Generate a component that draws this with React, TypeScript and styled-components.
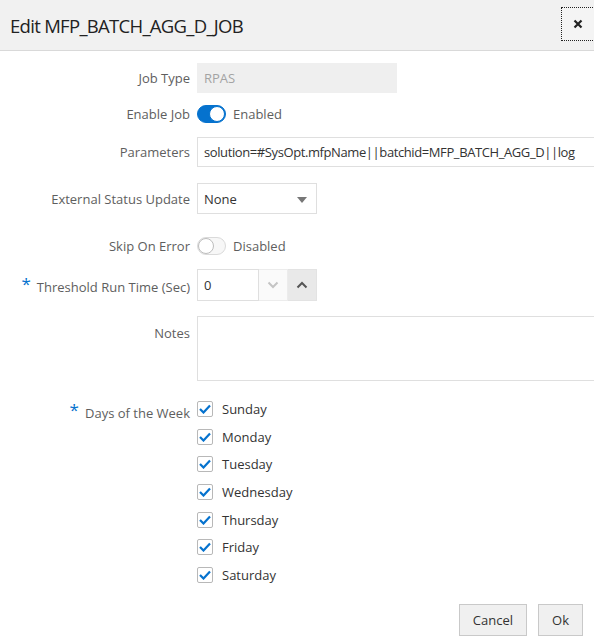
import React from "react";
import styled, { createGlobalStyle } from "styled-components";

const GlobalStyle = createGlobalStyle`
  html, body { margin: 0; padding: 0; background: #fff; }
  body { font-family: "Open Sans", "Noto Sans", sans-serif; overflow: hidden; }
  * { box-sizing: border-box; }
`;

const Dialog = styled.div`
  width: 594px;
  height: 640px;
  display: flex;
  flex-direction: column;
  background: #fff;
  overflow: hidden;
`;

const Header = styled.div`
  height: 51px;
  flex: none;
  display: flex;
  align-items: center;
  justify-content: space-between;
  padding-left: 10px;
  background: #f1f1f1;
  border-bottom: 1px solid #d9d9d9;
`;

const Title = styled.h1`
  margin: 0;
  font-size: 18.5px;
  font-weight: 400;
  color: #222;
  letter-spacing: -0.7px;
`;

const CloseButton = styled.button`
  width: 34px;
  height: 34px;
  margin-right: -1px;
  margin-top: -2px;
  border: 1px dotted #222;
  background: #f4f4f4;
  display: flex;
  align-items: center;
  justify-content: center;
  padding: 0;
`;

const Body = styled.div`
  flex: 1;
  padding-top: 12px;
  display: flex;
  flex-direction: column;
`;

const Row = styled.div<{ $top?: number; $align?: string }>`
  display: grid;
  grid-template-columns: 190px 1fr;
  column-gap: 7px;
  align-items: ${(p) => p.$align ?? "center"};
  margin-top: ${(p) => p.$top ?? 0}px;
  min-height: 30px;
`;

const Label = styled.label<{ $offset?: number }>`
  text-align: right;
  font-size: 13px;
  color: #5e5e5e;
  white-space: nowrap;
  padding-top: ${(p) => p.$offset ?? 0}px;
`;

const Required = styled.span`
  color: #0572ce;
  font-size: 17px;
  margin-right: 6px;
  position: relative;
  top: -2px;
`;

const TextBox = styled.div<{ $width?: string; $disabled?: boolean; $bleed?: boolean }>`
  width: ${(p) => p.$width ?? "auto"};
  height: 30px;
  display: flex;
  align-items: center;
  padding: 0 6px;
  border: 1px solid ${(p) => (p.$disabled ? "#efefef" : "#dfdfdf")};
  background: ${(p) => (p.$disabled ? "#efefef" : "#fff")};
  color: ${(p) => (p.$disabled ? "#a3a3a3" : "#333")};
  font-size: 13px;
  letter-spacing: ${(p) => (p.$bleed ? "-0.4px" : "0")};
  white-space: nowrap;
  overflow: hidden;
  margin-right: ${(p) => (p.$bleed ? "-20px" : "0")};
`;

const Select = styled.div`
  width: 120px;
  height: 31px;
  display: flex;
  align-items: center;
  justify-content: space-between;
  padding: 0 9px 0 6px;
  border: 1px solid #dfdfdf;
  font-size: 13px;
  color: #333;
`;

const Caret = styled.span`
  width: 0;
  height: 0;
  border-left: 5px solid transparent;
  border-right: 5px solid transparent;
  border-top: 6px solid #777;
  margin-top: 2px;
`;

const SwitchWrap = styled.div`
  display: flex;
  align-items: center;
  gap: 7px;
  font-size: 13px;
  color: #5e5e5e;
`;

const Track = styled.span<{ $on: boolean }>`
  width: 29px;
  height: 18px;
  border-radius: 9px;
  position: relative;
  background: ${(p) => (p.$on ? "#0572ce" : "#f7f7f7")};
  border: 1px solid ${(p) => (p.$on ? "#0572ce" : "#dadada")};
`;

const Knob = styled.span<{ $on: boolean }>`
  position: absolute;
  top: 0px;
  left: ${(p) => (p.$on ? "11px" : "0px")};
  width: 16px;
  height: 16px;
  border-radius: 50%;
  background: #fff;
  border: 1px solid ${(p) => (p.$on ? "#0572ce" : "#bdbdbd")};
`;

const Stepper = styled.div`
  display: flex;
  height: 32px;
`;

const NumberField = styled.div`
  width: 62px;
  height: 32px;
  border: 1px solid #dfdfdf;
  display: flex;
  align-items: center;
  padding: 0 6px;
  font-size: 13px;
  color: #333;
`;

const StepButton = styled.div<{ $active?: boolean }>`
  width: 29px;
  height: 32px;
  display: flex;
  align-items: center;
  justify-content: center;
  background: ${(p) => (p.$active ? "#e9e9e9" : "#fafafa")};
  border: 1px solid ${(p) => (p.$active ? "#e3e3e3" : "#ececec")};
  border-left: none;
`;

const TextArea = styled.div`
  height: 65px;
  border: 1px solid #dfdfdf;
  margin-right: -20px;
`;

const DayList = styled.div`
  display: flex;
  flex-direction: column;
  gap: 11.7px;
  padding-top: 1px;
`;

const DayItem = styled.div`
  display: flex;
  align-items: center;
  gap: 9px;
  height: 16px;
  font-size: 13px;
  color: #333;
`;

const Box = styled.span`
  width: 16px;
  height: 16px;
  border: 1px solid #b8b8b8;
  border-radius: 2px;
  background: #fff;
  display: flex;
  align-items: center;
  justify-content: center;
`;

const Footer = styled.div`
  margin-top: auto;
  display: flex;
  justify-content: flex-end;
  gap: 11px;
  padding: 0 11px 4px 0;
`;

const Button = styled.button`
  height: 32px;
  padding: 0 13px;
  font-family: inherit;
  font-size: 13px;
  color: #333;
  background: #f0f0f0;
  border: 1px solid #c9c9c9;
  border-radius: 0;
`;

const Chevron = ({ up, color }: { up?: boolean; color: string }) => (
  <svg width="12" height="8" viewBox="0 0 12 8">
    <path
      d={up ? "M1.5 6.5 L6 2 L10.5 6.5" : "M1.5 1.5 L6 6 L10.5 1.5"}
      fill="none"
      stroke={color}
      strokeWidth="2"
    />
  </svg>
);

const Check = () => (
  <svg width="12" height="10" viewBox="0 0 12 10">
    <path d="M1 5 L4.5 8.5 L11 1.5" fill="none" stroke="#0572ce" strokeWidth="2.2" />
  </svg>
);

const Toggle = ({ on, text }: { on: boolean; text: string }) => (
  <SwitchWrap>
    <Track $on={on}>
      <Knob $on={on} />
    </Track>
    {text}
  </SwitchWrap>
);

const days = ["Sunday", "Monday", "Tuesday", "Wednesday", "Thursday", "Friday", "Saturday"];

export default function App() {
  return (
    <>
      <GlobalStyle />
      <Dialog>
        <Header>
          <Title>Edit MFP_BATCH_AGG_D_JOB</Title>
          <CloseButton aria-label="Close">
            <svg width="10" height="10" viewBox="0 0 10 10">
              <path d="M1.5 1.5 L8.5 8.5 M8.5 1.5 L1.5 8.5" stroke="#222" strokeWidth="2.2" />
            </svg>
          </CloseButton>
        </Header>
        <Body>
          <Row>
            <Label>Job Type</Label>
            <TextBox $width="200px" $disabled>RPAS</TextBox>
          </Row>
          <Row $top={6}>
            <Label>Enable Job</Label>
            <Toggle on text="Enabled" />
          </Row>
          <Row $top={8}>
            <Label>Parameters</Label>
            <TextBox $bleed>solution=#SysOpt.mfpName||batchid=MFP_BATCH_AGG_D||log</TextBox>
          </Row>
          <Row $top={16}>
            <Label>External Status Update</Label>
            <Select>
              None
              <Caret />
            </Select>
          </Row>
          <Row $top={17}>
            <Label>Skip On Error</Label>
            <Toggle on={false} text="Disabled" />
          </Row>
          <Row $top={8}>
            <Label>
              <Required>*</Required>Threshold Run Time (Sec)
            </Label>
            <Stepper>
              <NumberField>0</NumberField>
              <StepButton>
                <Chevron color="#c4c4c4" />
              </StepButton>
              <StepButton $active>
                <Chevron up color="#555" />
              </StepButton>
            </Stepper>
          </Row>
          <Row $top={15} $align="start">
            <Label $offset={8}>Notes</Label>
            <TextArea />
          </Row>
          <Row $top={19} $align="start">
            <Label $offset={0}>
              <Required>*</Required>Days of the Week
            </Label>
            <DayList>
              {days.map((d) => (
                <DayItem key={d}>
                  <Box>
                    <Check />
                  </Box>
                  {d}
                </DayItem>
              ))}
            </DayList>
          </Row>
        </Body>
        <Footer>
          <Button>Cancel</Button>
          <Button>Ok</Button>
        </Footer>
      </Dialog>
    </>
  );
}
